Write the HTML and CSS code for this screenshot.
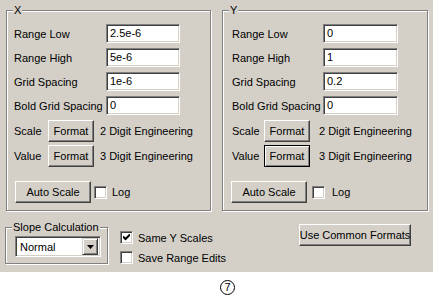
FILE: index.html
```html
<!DOCTYPE html>
<html lang="en">
<head>
    <meta charset="UTF-8">
    <title>Axis Settings</title>
    <link rel="stylesheet" href="styles.css">
</head>
<body>
    <div class="dialog">
        <div class="axes">
            <div class="group axis axis-x">
                <span class="group-title">X</span>
                <div class="fields">
                    <label>Range Low</label><div class="field">2.5e-6</div>
                    <label>Range High</label><div class="field">5e-6</div>
                    <label>Grid Spacing</label><div class="field">1e-6</div>
                    <label>Bold Grid Spacing</label><div class="field">0</div>
                </div>
                <div class="format-row">
                    <span class="format-label">Scale</span>
                    <span class="btn btn-format">Format</span>
                    <span class="format-text">2 Digit Engineering</span>
                </div>
                <div class="format-row">
                    <span class="format-label">Value</span>
                    <span class="btn btn-format">Format</span>
                    <span class="format-text">3 Digit Engineering</span>
                </div>
                <div class="auto-row">
                    <span class="btn btn-auto">Auto Scale</span>
                    <span class="check"></span>
                    <span>Log</span>
                </div>
            </div>

            <div class="group axis axis-y">
                <span class="group-title">Y</span>
                <div class="fields">
                    <label>Range Low</label><div class="field">0</div>
                    <label>Range High</label><div class="field">1</div>
                    <label>Grid Spacing</label><div class="field">0.2</div>
                    <label>Bold Grid Spacing</label><div class="field">0</div>
                </div>
                <div class="format-row">
                    <span class="format-label">Scale</span>
                    <span class="btn btn-format">Format</span>
                    <span class="format-text">2 Digit Engineering</span>
                </div>
                <div class="format-row">
                    <span class="format-label">Value</span>
                    <span class="btn btn-format btn-default">Format</span>
                    <span class="format-text">3 Digit Engineering</span>
                </div>
                <div class="auto-row">
                    <span class="btn btn-auto">Auto Scale</span>
                    <span class="check"></span>
                    <span>Log</span>
                </div>
            </div>
        </div>

        <div class="bottom">
            <div class="group slope">
                <span class="group-title">Slope Calculation</span>
                <div class="select">
                    <span class="select-value">Normal</span>
                    <span class="select-arrow">
                        <svg width="7" height="4" viewBox="0 0 7 4"><path d="M0 0h7L3.5 4z" fill="#000"/></svg>
                    </span>
                </div>
            </div>
            <div class="checks">
                <div class="check-row">
                    <span class="check">
                        <svg width="7" height="7" viewBox="0 0 7 7"><path d="M0 2.5l2.5 2.5L7 0.5" stroke="#000" stroke-width="2" fill="none"/></svg>
                    </span>
                    <span>Same Y Scales</span>
                </div>
                <div class="check-row">
                    <span class="check"></span>
                    <span>Save Range Edits</span>
                </div>
            </div>
            <span class="btn btn-common">Use Common Formats</span>
        </div>
    </div>
    <div class="caption"><span class="circled">7</span></div>
</body>
</html>
```

FILE: styles.css
```css
body {
    margin: 0;
    font-family: "Liberation Sans", Arial, sans-serif;
    font-size: 11px;
    color: #000;
    background: #fff;
}
.dialog {
    background: #d4d0c8;
    height: 272px;
    box-sizing: border-box;
    padding: 10px 5px 0 5px;
}
.axes {
    display: flex;
    gap: 11px;
}
/* etched group box */
.group {
    position: relative;
    border: 1px solid #808080;
    box-shadow: inset 1px 1px 0 #fff, 1px 1px 0 #fff;
    box-sizing: border-box;
}
.group-title {
    position: absolute;
    top: -7px;
    left: 6px;
    padding: 0 1px;
    line-height: 13px;
    background: #d4d0c8;
}
.axis {
    height: 201px;
    padding-top: 13px;
}
.axis-x {
    width: 205px;
    margin-left: 1px;
    padding-left: 7px;
}
.axis-y {
    width: 206px;
    padding-left: 9px;
}
.fields {
    display: grid;
    grid-template-columns: 92px auto;
    row-gap: 5px;
    align-items: center;
}
.axis-y .fields {
    grid-template-columns: 91px auto;
}
.field {
    width: 74px;
    height: 19px;
    box-sizing: border-box;
    background: #fff;
    border: 1px solid;
    border-color: #808080 #fff #fff #808080;
    box-shadow: inset 1px 1px 0 #404040, inset -1px -1px 0 #d4d0c8;
    padding: 0 3px;
    line-height: 17px;
}
.axis-y .field {
    width: 75px;
}
.btn {
    display: inline-flex;
    align-items: center;
    justify-content: center;
    box-sizing: border-box;
    height: 22px;
    white-space: nowrap;
    background: #d4d0c8;
    border: 1px solid;
    border-color: #fff #404040 #404040 #fff;
    box-shadow: inset -1px -1px 0 #808080;
}
.btn-default {
    border-color: #000;
    box-shadow: inset 1px 1px 0 #fff, inset -1px -1px 0 #808080;
}
.format-row {
    display: flex;
    align-items: center;
    margin-top: 3px;
}
.fields + .format-row {
    margin-top: 5px;
}
.format-label {
    width: 34px;
}
.axis-y .format-label {
    width: 32px;
}
.btn-format {
    width: 46px;
}
.format-text {
    margin-left: 6px;
}
.axis-y .format-text {
    margin-left: 9px;
}
.auto-row {
    display: flex;
    align-items: center;
    gap: 5px;
    margin-top: 14px;
    margin-left: 1px;
}
.axis-y .auto-row {
    margin-left: -1px;
    gap: 7px;
}
.btn-auto {
    width: 76px;
    margin-right: -2px;
}
.check {
    display: inline-flex;
    align-items: center;
    justify-content: center;
    width: 13px;
    height: 13px;
    box-sizing: border-box;
    background: #fff;
    border: 1px solid;
    border-color: #808080 #fff #fff #808080;
    box-shadow: inset 1px 1px 0 #404040, inset -1px -1px 0 #d4d0c8;
}
.bottom {
    display: flex;
    align-items: flex-start;
    margin-top: 13px;
}
.slope {
    width: 103px;
    height: 37px;
    margin-top: 3px;
    padding: 8px 0 0 9px;
}
.select {
    display: flex;
    align-items: center;
    width: 86px;
    height: 21px;
    box-sizing: border-box;
    background: #fff;
    border: 1px solid;
    border-color: #808080 #fff #fff #808080;
    box-shadow: inset 1px 1px 0 #404040, inset -1px -1px 0 #d4d0c8;
    padding: 2px 2px 2px 4px;
}
.select-value {
    flex: 1;
}
.select-arrow {
    display: flex;
    align-items: center;
    justify-content: center;
    width: 16px;
    height: 17px;
    box-sizing: border-box;
    background: #d4d0c8;
    border: 1px solid;
    border-color: #d4d0c8 #404040 #404040 #d4d0c8;
    box-shadow: inset 1px 1px 0 #fff, inset -1px -1px 0 #808080;
}
.checks {
    display: flex;
    flex-direction: column;
    gap: 7px;
    margin: 7px 0 0 12px;
}
.check-row {
    display: flex;
    align-items: center;
    gap: 5px;
    height: 13px;
}
.btn-common {
    width: 112px;
    margin: 0 17px 0 auto;
}
.caption {
    display: flex;
    justify-content: center;
    padding: 8px 0 0 22px;
}
.circled {
    display: inline-flex;
    align-items: center;
    justify-content: center;
    width: 15px;
    height: 15px;
    box-sizing: border-box;
    border: 1px solid #000;
    border-radius: 50%;
    font-size: 11px;
    line-height: 1;
}
```
